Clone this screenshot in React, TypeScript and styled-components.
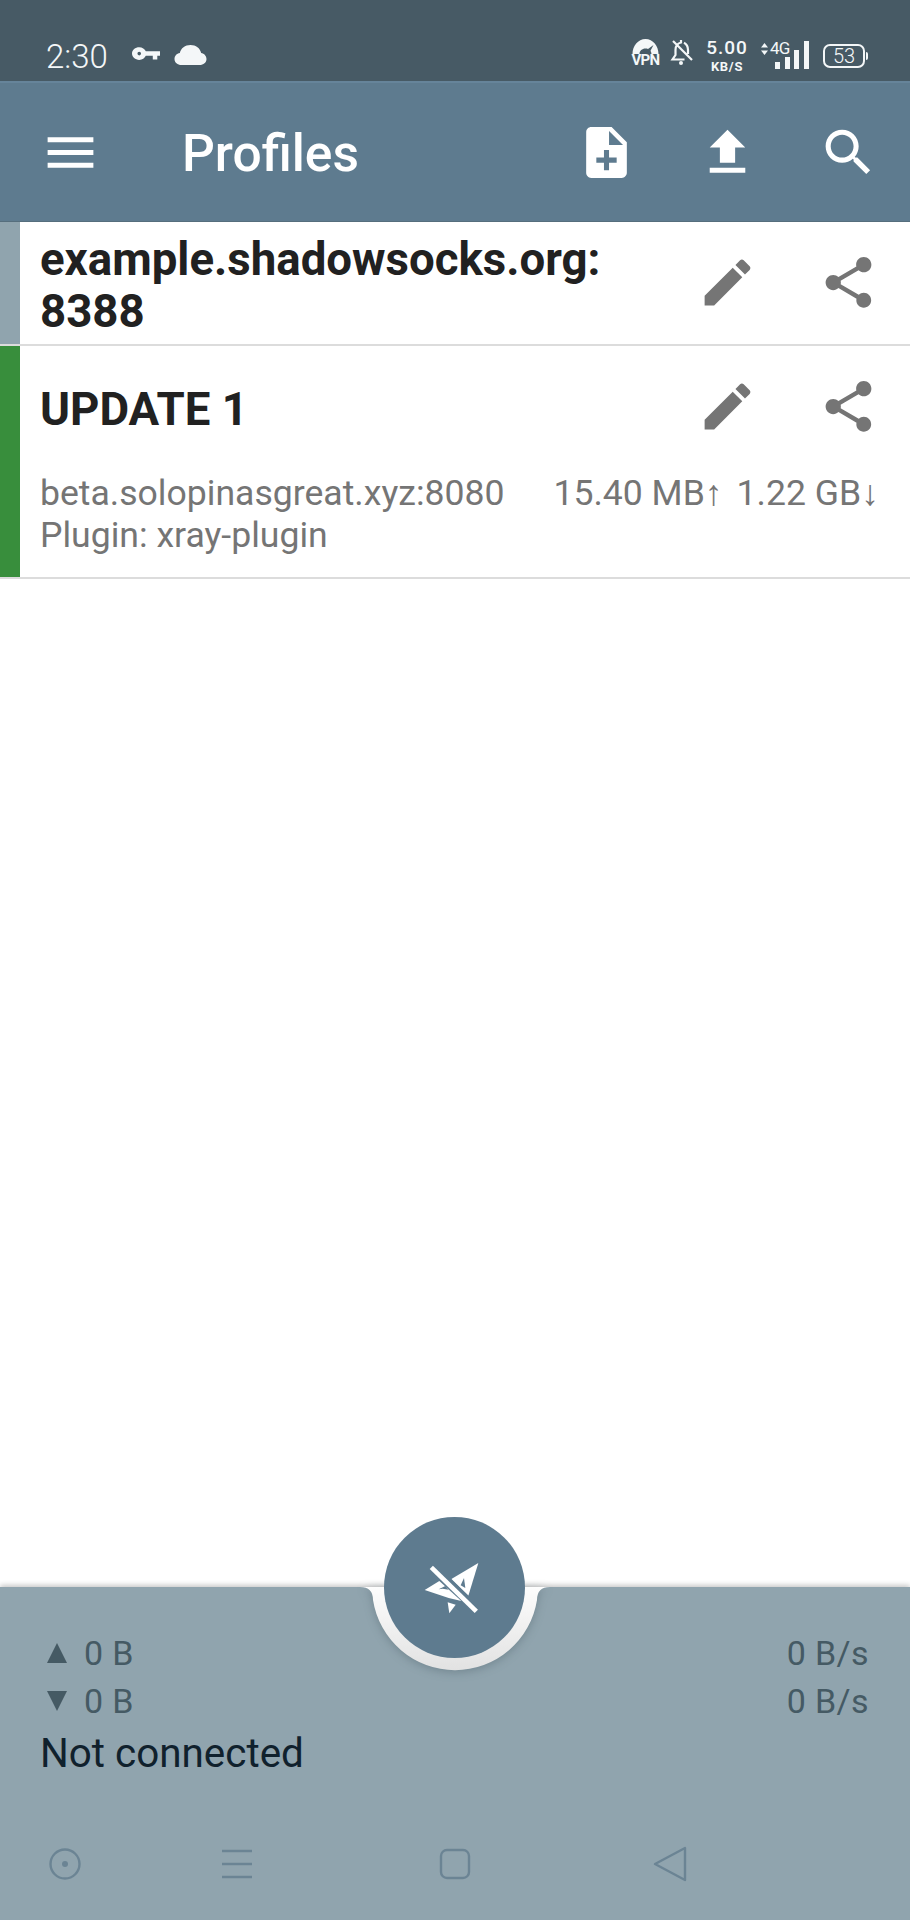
import * as React from 'react'
import styled, { createGlobalStyle } from 'styled-components'

const GlobalStyle = createGlobalStyle`
  html, body {
    margin: 0;
    padding: 0;
    background: #fff;
    font-family: Roboto, "Liberation Sans", sans-serif;
  }
`

const Page = styled.div`
  display: flex;
  flex-direction: column;
  width: 910px;
  height: 1920px;
  overflow: hidden;
`

const StatusBar = styled.div`
  height: 81px;
  box-sizing: border-box;
  padding: 38px 45px 0 46px;
  background: #475a65;
  display: flex;
  align-items: flex-start;
  color: #f4f7f8;
  flex-shrink: 0;
`

const Clock = styled.span`
  font-size: 33px;
  font-weight: 300;
  line-height: 38px;
  width: 86px;
`

const StatusGlyph = styled.svg<{ $gap?: number; $top?: number }>`
  display: block;
  margin-right: ${(p) => p.$gap ?? 0}px;
  margin-top: ${(p) => p.$top ?? 0}px;
  fill: currentColor;
  flex-shrink: 0;
`

const StatusRight = styled.div`
  margin-left: auto;
  display: flex;
  align-items: flex-start;
`

const VpnBadge = styled.div`
  width: 29px;
  margin-right: 10px;
  display: flex;
  flex-direction: column;
  align-items: center;
`

const VpnLabel = styled.span`
  font-size: 15px;
  font-weight: 700;
  line-height: 13px;
  letter-spacing: -0.7px;
`

const Speed = styled.div`
  width: 42px;
  margin-right: 12px;
  display: flex;
  flex-direction: column;
  align-items: center;
`

const SpeedValue = styled.span`
  font-size: 19px;
  font-weight: 500;
  line-height: 19px;
  letter-spacing: 1px;
`

const SpeedUnit = styled.span`
  margin-top: 3px;
  font-size: 13px;
  font-weight: 700;
  line-height: 13px;
  letter-spacing: 0.7px;
`

const Signal = styled.div`
  position: relative;
  width: 49px;
  height: 30px;
  margin-right: 14px;
  margin-top: 2px;
`

const NetLabel = styled.span`
  position: absolute;
  left: 10px;
  top: 0;
  font-size: 17px;
  line-height: 17px;
  letter-spacing: -0.8px;
`

const Battery = styled.div`
  position: relative;
  width: 38px;
  height: 20px;
  margin-top: 6px;
  border: 2px solid #f4f7f8;
  border-radius: 7px;
  display: flex;
  align-items: center;
  justify-content: center;
  font-size: 20px;
  font-weight: 300;
  line-height: 20px;

  &::after {
    content: '';
    position: absolute;
    right: -5px;
    top: 6px;
    width: 2px;
    height: 8px;
    background: #f4f7f8;
    border-radius: 0 2px 2px 0;
  }
`

const Toolbar = styled.header`
  flex-shrink: 0;
  padding-right: 1px;
  background: #5e7b8f;
  border-top: 2px solid #66849a;
  border-bottom: 1px solid #566e7d;
  height: 138px;
  display: flex;
  align-items: center;
  color: #fff;
`

const NavButton = styled.div`
  width: 140px;
  height: 100%;
  display: flex;
  align-items: center;
  justify-content: center;
`

const Title = styled.h1`
  flex: 1;
  margin: 4px 0 0 42px;
  font-size: 51.5px;
  font-weight: 500;
  line-height: 60px;
`

const IconButton = styled.div<{ $tone?: string }>`
  width: 121px;
  height: 121px;
  flex-shrink: 0;
  display: flex;
  align-items: center;
  justify-content: center;
  color: ${(p) => p.$tone ?? '#fff'};
`

const Icon = styled.svg`
  width: 61px;
  height: 61px;
  fill: currentColor;
  display: block;
`

const List = styled.main`
  flex: 1;
  background: #fff;
`

const Card = styled.article`
  display: flex;
  border-bottom: 2px solid #dcdcdc;
  background: #fff;
`

const Stripe = styled.div<{ $color: string }>`
  width: 20px;
  flex-shrink: 0;
  background: ${(p) => p.$color};
`

const CardContent = styled.div`
  flex: 1;
  padding-left: 20px;
`

const CardHead = styled.div`
  display: flex;
  align-items: flex-start;
  min-height: 122px;
  padding-right: 1px;
`

const CardTitle = styled.h2`
  flex: 1;
  align-self: center;
  margin: 5px 0 0;
  font-size: 45.6px;
  font-weight: 700;
  line-height: 52px;
  color: #212121;
`

const CardBody = styled.div`
  display: flex;
  justify-content: space-between;
  padding: 4px 31px 21px 0;
  font-size: 35.6px;
  line-height: 42px;
  color: #757575;
`

const Traffic = styled.div`
  display: flex;
  gap: 14px;
  white-space: pre;
`

const BottomBar = styled.footer`
  position: relative;
  height: 333px;
  flex-shrink: 0;
  background: #90a4ae;
  box-shadow: 0 -2px 5px rgba(0, 0, 0, 0.22);
`

const Notch = styled.svg`
  position: absolute;
  left: 340px;
  top: 0;
  overflow: visible;
  filter: drop-shadow(0 2px 5px rgba(60, 80, 90, 0.35));
`

const Fab = styled.div`
  position: absolute;
  left: 384px;
  top: -70px;
  width: 141px;
  height: 141px;
  border-radius: 50%;
  background: #5e7b8f;
  display: flex;
  align-items: center;
  justify-content: center;
`

const Stats = styled.div`
  display: flex;
  justify-content: space-between;
  padding: 42px 41px 0 40px;
  height: 188px;
  box-sizing: border-box;
`

const StatColumn = styled.div`
  display: flex;
  flex-direction: column;
`

const StatLine = styled.span<{ $right?: boolean }>`
  display: flex;
  flex-shrink: 0;
  align-items: center;
  justify-content: ${(p) => (p.$right ? 'flex-end' : 'flex-start')};
  height: 48px;
  font-size: 34px;
  color: #455a64;
  letter-spacing: 0.4px;
`

const Arrow = styled.svg`
  width: 22px;
  height: 22px;
  margin: 0 16px 0 6px;
  fill: #455a64;
`

const Status = styled.div`
  margin-top: 4px;
  font-size: 40.4px;
  line-height: 50px;
  color: #10212d;
`

const SystemNav = styled.nav`
  display: grid;
  grid-template-columns: 130px 214px 222px 208px;
  justify-items: center;
  align-items: center;
  height: 60px;
  margin-top: 59px;
  color: #6b8494;
`

const NavGlyph = styled.svg`
  width: 36px;
  height: 36px;
  fill: none;
  stroke: currentColor;
  stroke-width: 2.4;
  stroke-linejoin: round;
`

const icons = {
  menu: 'M3 18h18v-2H3v2zm0-5h18v-2H3v2zm0-7v2h18V6H3z',
  noteAdd:
    'M14 2H6c-1.1 0-1.99.9-1.99 2L4 20c0 1.1.89 2 1.99 2H18c1.1 0 2-.9 2-2V8l-6-6zm2 14h-3v3h-2v-3H8v-2h3v-3h2v3h3v2zm-3-7V3.5L18.5 9H13z',
  upload: 'M9 16h6v-6h4l-7-7-7 7h4zm-4 2h14v2H5z',
  search:
    'M15.5 14h-.79l-.28-.27C15.41 12.59 16 11.11 16 9.5 16 5.91 13.09 3 9.5 3S3 5.91 3 9.5 5.91 16 9.5 16c1.61 0 3.09-.59 4.23-1.57l.27.28v.79l5 4.99L20.49 19l-4.99-5zm-6 0C7.01 14 5 11.99 5 9.5S7.01 5 9.5 5 14 7.01 14 9.5 11.99 14 9.5 14z',
  edit: 'M3 17.25V21h3.75L17.81 9.94l-3.75-3.75L3 17.25zM20.71 7.04c.39-.39.39-1.02 0-1.41l-2.34-2.34c-.39-.39-1.02-.39-1.41 0l-1.83 1.83 3.75 3.75 1.83-1.83z',
  share:
    'M18 16.08c-.76 0-1.44.3-1.96.77L8.91 12.7c.05-.23.09-.46.09-.7s-.04-.47-.09-.7l7.05-4.11c.54.5 1.25.81 2.04.81 1.66 0 3-1.34 3-3s-1.34-3-3-3-3 1.34-3 3c0 .24.04.47.09.7L8.04 9.81C7.5 9.31 6.79 9 6 9c-1.66 0-3 1.34-3 3s1.34 3 3 3c.79 0 1.5-.31 2.04-.81l7.12 4.16c-.05.21-.08.43-.08.65 0 1.61 1.31 2.92 2.92 2.92 1.61 0 2.92-1.31 2.92-2.92s-1.31-2.92-2.92-2.92z',
}

const MaterialIcon = ({ d }: { d: string }) => (
  <Icon viewBox="0 0 24 24">
    <path d={d} fillRule="evenodd" />
  </Icon>
)

const CardActions = () => (
  <>
    <IconButton $tone="#757575">
      <MaterialIcon d={icons.edit} />
    </IconButton>
    <IconButton $tone="#757575">
      <MaterialIcon d={icons.share} />
    </IconButton>
  </>
)

// plane with a slash through it, coordinates traced from the reference
const PlaneOff = () => (
  <svg width="70" height="70" viewBox="240 157 210 210">
    <path fill="#fff" d="M415 187 333 236 385 285Z" />
    <path fill="#5e7b8f" d="M372 232 362 254 376 262Z" />
    <path fill="#fff" d="M254 268 298 241 364 301 326 292Z" />
    <path fill="#5e7b8f" d="M296 266 316 256 326 267 308 264Z" />
    <path fill="#fff" d="M323 305 347 312 328 338Z" />
    <path stroke="#5e7b8f" strokeWidth="9" d="M282 190 417 322" />
    <path stroke="#fff" strokeWidth="14" d="M274 200 409 332" />
  </svg>
)

const StatusIcons = () => (
  <StatusRight>
    <VpnBadge>
      <StatusGlyph width="29" height="16" viewBox="0 0 28 16">
        <path d="M1 16C1 8 6.5 1 14 1s13 7 13 15h-7c0-1-.4-2.3-1-3.3l3-5.7-5.500 4c-.8-.3-1.600-.4-2.500-.4-3.500 0-6 2.500-6 5.400H1Z" />
      </StatusGlyph>
      <VpnLabel>VPN</VpnLabel>
    </VpnBadge>
    <StatusGlyph $gap={12} width="24" height="28" viewBox="0 0 24 28">
      <path
        d="M11 2v2.500C7 5.500 5.500 8.500 5.500 12v5L2.500 21.500h12M3 3l19 19M18 16v-4c0-3.500-1.500-6-4-7.300"
        fill="none"
        stroke="currentColor"
        strokeWidth="2.200"
      />
      <circle cx="11" cy="25" r="2" />
    </StatusGlyph>
    <Speed>
      <SpeedValue>5.00</SpeedValue>
      <SpeedUnit>KB/S</SpeedUnit>
    </Speed>
    <Signal>
      <StatusGlyph width="49" height="30" viewBox="0 0 49 30">
        <path d="M4.500 3 8 7.500H1ZM4.500 15 1 10.500h7Z" />
        <rect x="15" y="22" width="5" height="7" />
        <rect x="25" y="17" width="5" height="12" />
        <rect x="34" y="10" width="5" height="19" />
        <rect x="44" y="1" width="5" height="28" />
      </StatusGlyph>
      <NetLabel>4G</NetLabel>
    </Signal>
    <Battery>53</Battery>
  </StatusRight>
)

export default function App() {
  return (
    <Page>
      <GlobalStyle />
      <StatusBar>
        <Clock>2:30</Clock>
        <StatusGlyph $gap={14} $top={9} width="28" height="15" viewBox="0 0 31 16">
          <path
            fillRule="evenodd"
            d="M8 0c3.400 0 6.200 2 7.300 4.500H31v5h-3v4h-5v-4h-7.700C14.200 12 11.400 14 8 14 3.600 14 0 11 0 7s3.600-7 8-7Zm0 5a2 2 0 1 0 0 4 2 2 0 0 0 0-4Z"
          />
        </StatusGlyph>
        <StatusGlyph $top={6} width="33" height="22" viewBox="0 0 32 22">
          <path d="M7 21C3 21 0 18.500 0 15c0-3 2.200-5.500 5.300-6C6.500 4 10.500 1 16 1s9.500 3 10.700 8c3 .5 5.300 3 5.300 6 0 3.500-3 6-7 6H7Z" />
        </StatusGlyph>
        <StatusIcons />
      </StatusBar>

      <Toolbar>
        <NavButton>
          <MaterialIcon d={icons.menu} />
        </NavButton>
        <Title>Profiles</Title>
        <IconButton>
          <MaterialIcon d={icons.noteAdd} />
        </IconButton>
        <IconButton>
          <MaterialIcon d={icons.upload} />
        </IconButton>
        <IconButton>
          <MaterialIcon d={icons.search} />
        </IconButton>
      </Toolbar>

      <List>
        <Card>
          <Stripe $color="#90a4ae" />
          <CardContent>
            <CardHead>
              <CardTitle>example.shadowsocks.org: 8388</CardTitle>
              <CardActions />
            </CardHead>
          </CardContent>
        </Card>
        <Card>
          <Stripe $color="#388e3c" />
          <CardContent>
            <CardHead>
              <CardTitle>UPDATE 1</CardTitle>
              <CardActions />
            </CardHead>
            <CardBody>
              <span>
                beta.solopinasgreat.xyz:8080
                <br />
                Plugin: xray-plugin
              </span>
              <Traffic>
                <span>15.40 MB↑</span>
                <span>1.22 GB↓</span>
              </Traffic>
            </CardBody>
          </CardContent>
        </Card>
      </List>

      <BottomBar>
        <Notch width="230" height="83" viewBox="0 0 230 83">
          <defs>
            <linearGradient id="cradle" x1="0" y1="0" x2="0" y2="1">
              <stop offset="0" stopColor="#fdfdfd" />
              <stop offset="1" stopColor="#e2e2e2" />
            </linearGradient>
          </defs>
          <path fill="url(#cradle)" d="M20 0Q33 0 33 13A83 83 0 0 0 197 13Q197 0 210 0Z" />
        </Notch>
        <Fab>
          <PlaneOff />
        </Fab>
        <Stats>
          <StatColumn>
            <StatLine>
              <Arrow viewBox="0 0 22 22">
                <path d="M11 1 21 21H1Z" />
              </Arrow>
              0 B
            </StatLine>
            <StatLine>
              <Arrow viewBox="0 0 22 22">
                <path d="M1 1H21L11 21Z" />
              </Arrow>
              0 B
            </StatLine>
            <Status>Not connected</Status>
          </StatColumn>
          <StatColumn>
            <StatLine $right>0 B/s</StatLine>
            <StatLine $right>0 B/s</StatLine>
          </StatColumn>
        </Stats>
        <SystemNav>
          <NavGlyph viewBox="0 0 36 36">
            <circle cx="18" cy="18" r="14.500" />
            <circle cx="18" cy="18" r="3" fill="currentColor" stroke="none" />
          </NavGlyph>
          <NavGlyph viewBox="0 0 36 36">
            <path d="M3 5h30M3 18h30M3 31h30" />
          </NavGlyph>
          <NavGlyph viewBox="0 0 36 36">
            <rect x="4" y="4" width="28" height="28" rx="6" />
          </NavGlyph>
          <NavGlyph viewBox="0 0 36 36">
            <path d="M3 18 33 2V34Z" />
          </NavGlyph>
        </SystemNav>
      </BottomBar>
    </Page>
  )
}
